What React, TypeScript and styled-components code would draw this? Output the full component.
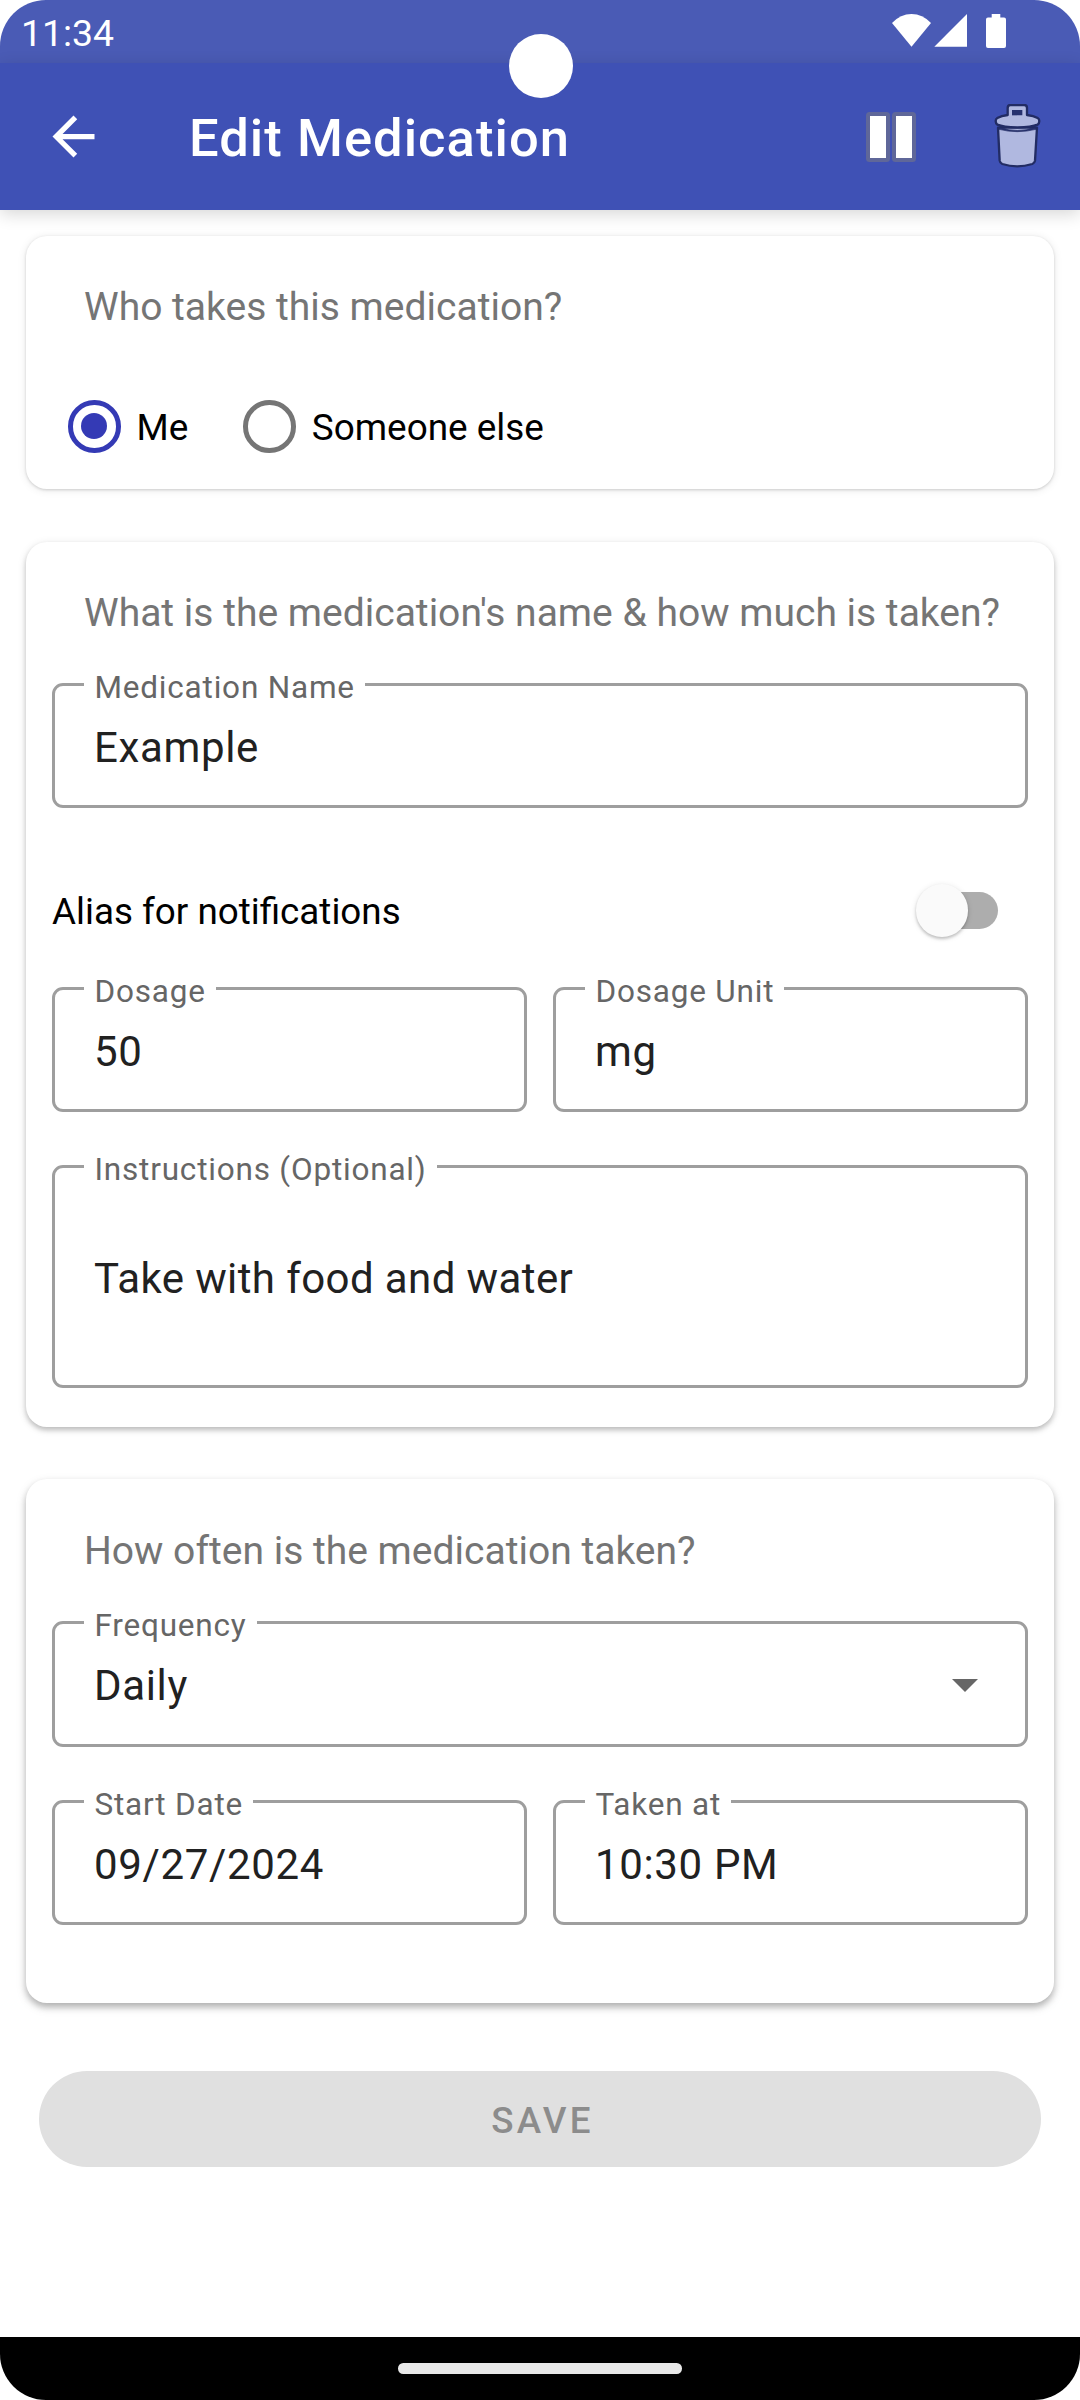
import React, { useState } from "react";
import styled, { createGlobalStyle } from "styled-components";

const GlobalStyle = createGlobalStyle`
  body {
    margin: 0;
    background: #ffffff;
    font-family: Roboto, "Noto Sans", sans-serif;
  }
  *, *::before, *::after { box-sizing: border-box; }
`;

const Screen = styled.div`
  position: relative;
  display: flex;
  flex-direction: column;
  width: 1080px;
  height: 2400px;
  overflow: hidden;
  border-radius: 46px;
  background: #ffffff;
`;

const StatusBar = styled.div`
  display: flex;
  justify-content: space-between;
  flex: none;
  height: 63px;
  padding: 0 74px 0 21px;
  background: #4a5bb5;
`;

const Clock = styled.span`
  padding-top: 11px;
  color: #ffffff;
  font-size: 37.4px;
  line-height: 44px;
`;

const StatusIcons = styled.svg`
  display: block;
  margin-top: 14px;
`;

const CameraHole = styled.div`
  position: absolute;
  z-index: 3;
  top: 34px;
  left: 509px;
  width: 64px;
  height: 64px;
  border-radius: 50%;
  background: #ffffff;
`;

const AppBar = styled.header`
  display: flex;
  align-items: center;
  flex: none;
  height: 147px;
  padding: 0 39px 0 42px;
  background: #3f51b5;
  box-shadow: 0 4px 16px rgba(0, 0, 0, 0.16);
`;

const IconButton = styled.button<{ $gap?: number }>`
  display: block;
  margin: 0 0 0 ${(p) => p.$gap ?? 0}px;
  padding: 0;
  border: 0;
  background: none;

  svg {
    display: block;
  }
`;

const Title = styled.h1`
  flex: 1;
  margin: 0;
  padding: 3px 0 0 84px;
  color: #ffffff;
  font-size: 52.5px;
  font-weight: 500;
  letter-spacing: 1.05px;
  line-height: 62px;
  white-space: nowrap;
`;

const Form = styled.main`
  display: flex;
  flex-direction: column;
  flex: 1;
  padding: 26px 26px 0;
`;

const shadows = {
  low: "0 1px 3px rgba(0, 0, 0, 0.16), 0 1px 10px rgba(0, 0, 0, 0.09)",
  mid: "0 3px 5px rgba(0, 0, 0, 0.2), 0 2px 10px rgba(0, 0, 0, 0.11)",
  high: "0 4px 6px rgba(0, 0, 0, 0.22), 0 4px 11px rgba(0, 0, 0, 0.13)",
};

const Card = styled.section<{ $shadow: keyof typeof shadows; $bottom: number; $top?: number; $after: number }>`
  flex: none;
  margin-bottom: ${(p) => p.$after}px;
  padding: ${(p) => p.$top ?? 47}px 26px ${(p) => p.$bottom}px;
  border-radius: 21px;
  background: #ffffff;
  box-shadow: ${(p) => shadows[p.$shadow]};
`;

const Question = styled.h2`
  margin: 0 0 46px;
  padding-left: 32px;
  color: #757575;
  font-size: 39.04px;
  font-weight: 400;
  line-height: 48px;
  white-space: nowrap;
`;

const RadioGroup = styled.div`
  display: flex;
  gap: 55px;
  margin-top: 69px;
  padding-left: 16px;
`;

const RadioOption = styled.label`
  display: flex;
  gap: 16px;
  color: #000000;
  font-size: 36.9px;
  line-height: 55px;
`;

const RadioDot = styled.span<{ $on: boolean }>`
  display: grid;
  place-items: center;
  width: 52.5px;
  height: 52.5px;
  border: 5.25px solid ${(p) => (p.$on ? "#343ab5" : "#757575")};
  border-radius: 50%;

  &::after {
    content: "";
    width: 26px;
    height: 26px;
    border-radius: 50%;
    background: ${(p) => (p.$on ? "#343ab5" : "transparent")};
  }
`;

const FieldRow = styled.div`
  display: grid;
  grid-template-columns: 1fr 1fr;
  gap: 26px;
`;

const FieldBox = styled.div<{ $height: number; $inset: number; $after: number }>`
  position: relative;
  display: flex;
  align-items: flex-start;
  justify-content: space-between;
  height: ${(p) => p.$height}px;
  margin-bottom: ${(p) => p.$after}px;
  padding: ${(p) => p.$inset}px 47px 0 39px;
  border: 3px solid #9e9e9e;
  border-radius: 11px;
`;

const FieldLabel = styled.span`
  position: absolute;
  top: -17px;
  left: 29px;
  padding: 0 10px 0 10.5px;
  background: #ffffff;
  color: #666666;
  font-size: 31.5px;
  letter-spacing: 0.8px;
  line-height: 37px;
  white-space: nowrap;
`;

const FieldValue = styled.span<{ $tracking: number }>`
  color: #212121;
  font-size: 42px;
  letter-spacing: ${(p) => p.$tracking}px;
  line-height: 49px;
  white-space: nowrap;
`;

const Caret = styled.svg`
  display: block;
  margin-top: 18px;
`;

const SwitchRow = styled.div`
  display: flex;
  justify-content: space-between;
  height: 55px;
  margin: 76px 0 48px;
  padding-right: 30px;
  color: #000000;
  font-size: 36.8px;
  line-height: 55px;
`;

const SwitchTrack = styled.button`
  display: flex;
  align-items: center;
  justify-content: flex-start;
  width: 80px;
  height: 37px;
  margin: 8px 0 0;
  padding: 0;
  border: 0;
  border-radius: 18.5px;
  background: #adadad;
`;

const SwitchThumb = styled.span`
  flex: none;
  width: 52.5px;
  height: 52.5px;
  margin-left: -2.5px;
  border-radius: 50%;
  background: #fafafa;
  box-shadow: 0 2px 3px rgba(0, 0, 0, 0.2), 0 1px 6px rgba(0, 0, 0, 0.1);
`;

const SaveButton = styled.button`
  display: flex;
  align-items: center;
  justify-content: center;
  flex: none;
  height: 96px;
  margin: 0 13px;
  padding: 3px 0 0 5px;
  border: 0;
  border-radius: 48px;
  background: #e0e0e0;
  color: #8c8c8c;
  font: 500 36.75px/43px Roboto, "Noto Sans", sans-serif;
  letter-spacing: 3.28px;
`;

const NavBar = styled.footer`
  display: flex;
  align-items: center;
  justify-content: center;
  flex: none;
  height: 63px;
  background: #000000;
`;

const HomeHandle = styled.div`
  width: 284px;
  height: 10.5px;
  border-radius: 5.25px;
  background: #e8e8e8;
`;

interface FieldProps {
  label: string;
  value: string;
  height?: number;
  inset?: number;
  tracking?: number;
  after?: number;
  menu?: boolean;
}

function Field({ label, value, height = 125, inset = 37, tracking = 0.65, after = 0, menu }: FieldProps) {
  return (
    <FieldBox $height={height} $inset={inset} $after={after}>
      <FieldLabel>{label}</FieldLabel>
      <FieldValue $tracking={tracking}>{value}</FieldValue>
      {menu && (
        <Caret width="26" height="13" viewBox="0 0 26 13">
          <path d="M0 0h26L13 13z" fill="#666666" />
        </Caret>
      )}
    </FieldBox>
  );
}

function BackIcon() {
  return (
    <svg width="63" height="63" viewBox="0 0 24 24" fill="#ffffff">
      <path d="M20 11H7.83l5.59-5.59L12 4l-8 8 8 8 1.41-1.41L7.83 13H20z" />
    </svg>
  );
}

function PauseIcon() {
  return (
    <svg width="50" height="50" viewBox="0 0 50 50">
      <rect width="24" height="50" rx="3.5" fill="#5f6799" />
      <rect x="26" width="24" height="50" rx="3.5" fill="#5f6799" />
      <rect x="4" y="4" width="16" height="42" fill="#ffffff" />
      <rect x="30" y="4" width="16" height="42" fill="#ffffff" />
    </svg>
  );
}

function TrashIcon() {
  return (
    <svg width="47" height="65" viewBox="582 308 141 195" stroke="#222c64" strokeWidth="7" strokeLinejoin="round">
      <path d="M594 379L599 478Q600 485 607 488Q651 502 697 488Q704 485 705 478L711 379Z" fill="#b0b8e0" />
      <path d="M597 377Q651 398 708 377V384Q651 398 597 384Z" fill="#27326f" strokeWidth="2" />
      <path
        d="M592 350Q604 343 623 341V320Q623 311 631 311H673Q681 311 681 320V341Q701 343 713 350Q718 353 718 359Q718 366 713 370Q695 378 652 378Q609 378 592 370Q587 366 587 359Q587 353 592 350Z"
        fill="#b0b8e0"
      />
      <path d="M636 326H667V342H636Z" fill="#27326f" stroke="none" />
    </svg>
  );
}

export default function App() {
  const [taker, setTaker] = useState("Me");

  return (
    <>
      <GlobalStyle />
      <Screen>
        <StatusBar>
          <Clock>11:34</Clock>
          <StatusIcons width="114" height="34" viewBox="0 0 114 34" fill="#ffffff">
            <path d="M0 9Q8.500 0 19.500 0T39 9L19.500 32.700Z" />
            <path d="M75 0V32.700H42.300Z" />
            <path d="M99.700 0h8.600v3.400h3.700a2 2 0 0 1 2 2V32a2 2 0 0 1-2 2H96a2 2 0 0 1-2-2V5.400a2 2 0 0 1 2-2h3.700z" />
          </StatusIcons>
        </StatusBar>
        <CameraHole />
        <AppBar>
          <IconButton aria-label="Back">
            <BackIcon />
          </IconButton>
          <Title>Edit Medication</Title>
          <IconButton aria-label="Pause">
            <PauseIcon />
          </IconButton>
          <IconButton aria-label="Delete" $gap={78}>
            <TrashIcon />
          </IconButton>
        </AppBar>

        <Form>
          <Card $shadow="low" $bottom={34} $after={53}>
            <Question>Who takes this medication?</Question>
            <RadioGroup>
              {["Me", "Someone else"].map((name) => (
                <RadioOption key={name} onClick={() => setTaker(name)}>
                  <RadioDot $on={taker === name} />
                  {name}
                </RadioOption>
              ))}
            </RadioGroup>
          </Card>

          <Card $shadow="mid" $bottom={39} $after={52}>
            <Question>What is the medication's name &amp; how much is taken?</Question>
            <Field label="Medication Name" value="Example" />
            <SwitchRow>
              Alias for notifications
              <SwitchTrack aria-label="Alias for notifications">
                <SwitchThumb />
              </SwitchTrack>
            </SwitchRow>
            <FieldRow>
              <Field label="Dosage" value="50" after={53} />
              <Field label="Dosage Unit" value="mg" after={53} />
            </FieldRow>
            <Field label="Instructions (Optional)" value="Take with food and water" height={223} inset={86} tracking={0.4} />
          </Card>

          <Card $shadow="high" $top={48} $bottom={78} $after={68}>
            <Question>How often is the medication taken?</Question>
            <Field label="Frequency" value="Daily" height={126} after={53} menu />
            <FieldRow>
              <Field label="Start Date" value="09/27/2024" />
              <Field label="Taken at" value="10:30 PM" />
            </FieldRow>
          </Card>

          <SaveButton>SAVE</SaveButton>
        </Form>

        <NavBar>
          <HomeHandle />
        </NavBar>
      </Screen>
    </>
  );
}
